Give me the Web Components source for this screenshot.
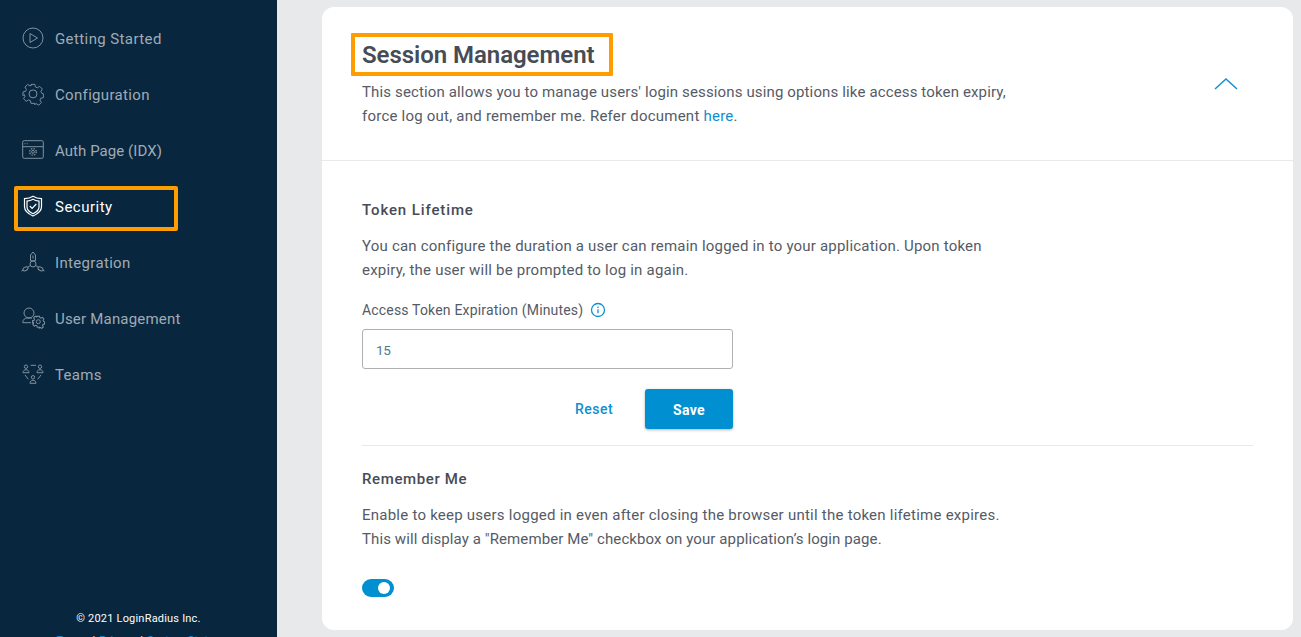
<!DOCTYPE html>
<html><head><meta charset="utf-8">
<style>
html,body{margin:0;height:637px;overflow:hidden;background:#e8e9eb;font-family:Roboto,"Liberation Sans",sans-serif}
body{display:flex}
.l{display:block}
a{color:#0f8fd0}
</style></head><body>
<template id="t-side"><style>
:host{display:flex;flex-direction:column;width:277px;height:637px;background:#08263e;flex:none;box-sizing:border-box;padding-top:11px;overflow:hidden}
nav{display:flex;flex-direction:column;flex:1}
footer{text-align:center;font-size:11px;color:#fff;line-height:22px;height:29px;letter-spacing:.2px}
footer a{color:#0f8fd0}footer i{font-style:normal;color:#fff;margin:0 4px}
</style><nav><slot></slot></nav><footer>© 2021 LoginRadius Inc.<br><a>Terms</a><i>|</i><a>Privacy</a><i>|</i><a>System Status</a></footer></template>

<template id="t-item"><style>
:host{display:flex;align-items:center;height:56px;padding-left:22px;gap:11px;font-size:15px;letter-spacing:.33px;color:#a0abb5;position:relative;box-sizing:border-box}
:host([active]){color:#fff;letter-spacing:.5px}
::slotted(svg){width:22px;height:22px;flex:none;fill:none;stroke:#7f919f;stroke-width:1;overflow:visible}
:host([active]) ::slotted(svg){stroke:#fff;stroke-width:1.2}
.mark{display:none;position:absolute;left:14px;top:7px;width:164px;height:45px;box-sizing:border-box;border:4px solid #ff9c00;border-radius:2px}
:host([active]) .mark{display:block}
</style><slot name="icon"></slot><span><slot></slot></span><div class="mark"></div></template>

<template id="t-card"><style>
:host{display:block;background:#fff;border-radius:12px;width:971px;height:623px;margin:7px 0 0 45px;flex:none;overflow:hidden}
</style><slot></slot></template>

<template id="t-head"><style>
:host{display:block;position:relative;height:154px;box-sizing:border-box;padding:26px 40px 0;border-bottom:1px solid #e8e9eb;color:#555b66}
h1{margin:0;font-size:24px;line-height:44px;font-weight:600;color:#464c56;letter-spacing:-.05px;position:relative;display:block;width:max-content}
h1::after{content:"";position:absolute;left:-11px;top:0;width:262px;height:43px;box-sizing:border-box;border:4px solid #ff9c00;border-radius:1px}
p{margin:3px 0 0;font-size:15px;line-height:24px;width:680px}
svg{position:absolute;left:892px;top:71px;width:24px;height:12px;fill:none;stroke:#1590d3;stroke-width:1.5}
</style><h1><slot name="title"></slot></h1><p><slot></slot></p><svg viewBox="0 0 24 12"><path d="M1 11 12 1 23 11"/></svg></template>

<template id="t-section"><style>
:host{display:block;color:#555b66;font-size:15px}
h2{margin:0 0 12px;font-size:15px;font-weight:500;line-height:24px;color:#464c56}
p{margin:0;line-height:24px;width:680px}
</style><h2><slot name="title"></slot></h2><p><slot name="desc"></slot></p><slot></slot></template>

<template id="t-field"><style>
:host{display:block;margin-top:16px;color:#555b66;font-size:14px;letter-spacing:.176px}
label{display:flex;align-items:center;gap:7px;height:24px}
svg{width:16px;height:16px;fill:none;stroke:#0f8fd0;stroke-width:1.3}
.in{margin-top:7px;width:371px;height:40px;box-sizing:border-box;border:1px solid #aeb0b3;border-radius:3px;padding-left:13px;line-height:40px;font-size:13.500px;letter-spacing:-.3px;color:#4f7a94}
</style><label><slot></slot><svg viewBox="0 0 16 16"><circle cx="8" cy="8" r="6.500"/><path d="M8 7.200v4M8 4.600v1.400"/></svg></label><div class="in"><slot name="value"></slot></div></template>

<template id="t-actions"><style>
:host{display:flex;align-items:center;justify-content:flex-end;width:371px;gap:32px;margin-top:20px;height:40px}
.r{color:#0f8fd0;font-size:14px;font-weight:500;letter-spacing:.45px}
.s{width:88px;height:40px;box-sizing:border-box;padding-top:1px;background:#0090d2;color:#fff;border-radius:3px;font-size:14px;font-weight:700;display:flex;align-items:center;justify-content:center;box-shadow:0 1px 3px rgba(0,0,0,.3);letter-spacing:.3px}
</style><span class="r">Reset</span><span class="s">Save</span></template>

<template id="t-toggle"><style>
:host{display:block;width:32px;height:18px;border-radius:9px;background:#0090d2;position:relative;margin-top:28px}
b{position:absolute;right:4px;top:3px;width:12px;height:12px;background:#fff;border-radius:50%}
</style><b></b></template>

<lr-sidebar>
<lr-item style="letter-spacing:.4px"><svg slot="icon" viewBox="0 0 22 22"><circle cx="11" cy="10" r="10"/><path d="M8 5.500v9l7.500-4.500z"/></svg>Getting Started</lr-item>
<lr-item><svg slot="icon" viewBox="0 0 22 22"><path d="M9 1h4l.7 2.800 1.900.8 2.500-1.500 2.800 2.800-1.500 2.500.8 1.900 1.800.7v4l-2.800.7-.8 1.900 1.500 2.500-2.800 2.800-2.500-1.500-1.900.8L13 21H9l-.7-2.800-1.900-.8-2.500 1.500-2.800-2.800 1.500-2.500-.8-1.900L.5 13V9l2.800-.7.800-1.900L2.600 3.900l2.800-2.800 2.500 1.500 1.900-.8z" transform="translate(.5 -.6) scale(.95)"/><circle cx="11" cy="9.900" r="4"/></svg>Configuration</lr-item>
<lr-item style="letter-spacing:.06px"><svg slot="icon" viewBox="0 0 22 22"><rect x=".7" y=".7" width="20.600" height="17.600" rx="1.500"/><path d="M.7 6.700h20.600M2.500 3.700h1M4.700 3.700h1"/><circle cx="11" cy="11.800" r="1.400"/><circle cx="11" cy="11.800" r="3.300" stroke-dasharray="1.500 1.100" stroke-width="1.300"/></svg>Auth Page (IDX)</lr-item>
<lr-item active><svg slot="icon" viewBox="0 0 22 22"><path d="M11 .2c2.500 1.700 5.500 2.400 8.500 2.500v8c0 4-3.500 7-8.500 9.300-5-2.300-8.500-5.300-8.500-9.300v-8c3-.1 6-.8 8.500-2.500z"/><path d="M11 3.200c2 1.200 4 1.700 6 1.900v5.800c0 3-2.500 5.100-6 6.800-3.500-1.700-6-3.800-6-6.800V5.100c2-.2 4-.7 6-1.900z"/><path d="m7.800 10 2.300 2.300 4.200-4.300"/></svg>Security</lr-item>
<lr-item><svg slot="icon" viewBox="0 0 22 22"><path d="M8.500 8.700V3L11 0l2.500 3v5.700zM11 3.500v3"/><circle cx="11" cy="12" r="3"/><path d="m13.600 13.500 2.400 1.500M8.400 13.500 6 15"/><ellipse cx="18.500" cy="16.800" rx="2.700" ry="1.700" transform="rotate(30 18.500 16.800)"/><ellipse cx="3.500" cy="16.800" rx="2.700" ry="1.700" transform="rotate(-30 3.500 16.800)"/><path d="m21 18.300 1.500.7M1 18.300l-1.500.7"/></svg>Integration</lr-item>
<lr-item style="letter-spacing:.2px"><svg slot="icon" viewBox="0 0 22 22"><circle cx="7" cy="5" r="5"/><path d="M.8 14.700v-.7C.8 11.800 3 10 5 10h5M.8 14.700H9"/><circle cx="16.300" cy="13.700" r="2"/><path d="M9 1h4l.7 2.800 1.900.8 2.500-1.500 2.800 2.800-1.500 2.500.8 1.900 1.800.7v4l-2.800.7-.8 1.900 1.500 2.500-2.800 2.800-2.500-1.500-1.900.8L13 21H9l-.7-2.800-1.900-.8-2.500 1.500-2.800-2.800 1.500-2.500-.8-1.900L.5 13V9l2.800-.7.800-1.900L2.600 3.900l2.800-2.800 2.500 1.500 1.900-.8z" transform="translate(10.200 7.600) scale(.56)" stroke-width="1.800"/></svg>User Management</lr-item>
<lr-item><svg slot="icon" viewBox="0 0 22 22"><circle cx="4" cy="2.700" r="1.700"/><path d="M1 8.700c0-1.800 1.200-3 3-3s3 1.200 3 3zM8.700 1.300H14"/><circle cx="18" cy="2.700" r="1.700"/><path d="M15 8.700c0-1.800 1.200-3 3-3s3 1.200 3 3z"/><circle cx="11" cy="13.300" r="1.700"/><path d="M8 19.300c0-1.800 1.200-3 3-3s3 1.200 3 3zM3 11l3.300 4.300M19 11l-3.300 4.300"/></svg>Teams</lr-item>
</lr-sidebar>

<lr-card>
<lr-head><span slot="title">Session Management</span><span class="l" style="letter-spacing:.138px">This section allows you to manage users' login sessions using options like access token expiry,</span><span class="l" style="letter-spacing:.225px">force log out, and remember me. Refer document <a>here</a>.</span></lr-head>
<lr-body>
<lr-section><span slot="title" style="letter-spacing:.88px">Token Lifetime</span><span slot="desc"><span class="l" style="letter-spacing:.2px">You can configure the duration a user can remain logged in to your application. Upon token</span><span class="l" style="letter-spacing:.22px">expiry, the user will be prompted to log in again.</span></span>
<lr-field>Access Token Expiration (Minutes)<span slot="value">15</span></lr-field>
<lr-actions></lr-actions>
</lr-section>
<lr-rule></lr-rule>
<lr-section><span slot="title" style="letter-spacing:.62px">Remember Me</span><span slot="desc"><span class="l" style="letter-spacing:.24px">Enable to keep users logged in even after closing the browser until the token lifetime expires.</span><span class="l" style="letter-spacing:.095px">This will display a "Remember Me" checkbox on your application’s login page.</span></span>
<lr-toggle></lr-toggle>
</lr-section>
</lr-body>
</lr-card>
<script>
const def=(n,id)=>customElements.define(n,class extends HTMLElement{constructor(){super();this.attachShadow({mode:'open'}).append(document.getElementById(id).content.cloneNode(true))}});
def('lr-sidebar','t-side');def('lr-item','t-item');def('lr-card','t-card');def('lr-head','t-head');def('lr-section','t-section');def('lr-field','t-field');def('lr-actions','t-actions');def('lr-toggle','t-toggle');
customElements.define('lr-body',class extends HTMLElement{constructor(){super();this.attachShadow({mode:'open'}).innerHTML='<style>:host{display:block;padding:37px 40px 0}</style><slot></slot>'}});
customElements.define('lr-rule',class extends HTMLElement{constructor(){super();this.attachShadow({mode:'open'}).innerHTML='<style>:host{display:block;height:1px;background:#e8e9eb;width:891px;margin:16px 0 21px}</style>'}});
</script>
</body></html>
